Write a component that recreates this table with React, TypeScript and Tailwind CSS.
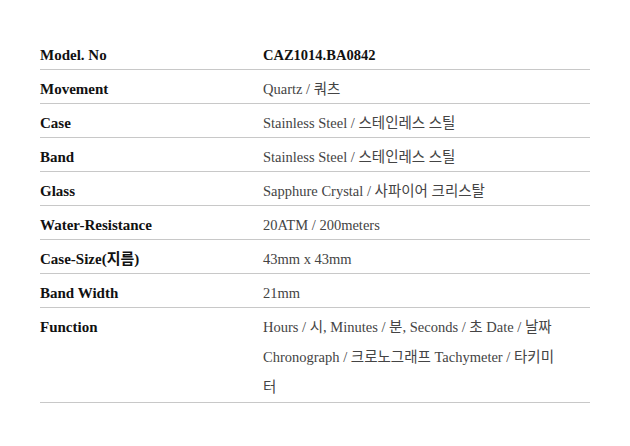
const rows: { label: string; value: string; bold?: boolean }[] = [
  { label: 'Model. No', value: 'CAZ1014.BA0842', bold: true },
  { label: 'Movement', value: 'Quartz / 쿼츠' },
  { label: 'Case', value: 'Stainless Steel / 스테인레스 스틸' },
  { label: 'Band', value: 'Stainless Steel / 스테인레스 스틸' },
  { label: 'Glass', value: 'Sapphure Crystal / 사파이어 크리스탈' },
  { label: 'Water-Resistance', value: '20ATM / 200meters' },
  { label: 'Case-Size(지름)', value: '43mm x 43mm' },
  { label: 'Band Width', value: '21mm' },
  {
    label: 'Function',
    value:
      'Hours / 시, Minutes / 분, Seconds / 초 Date / 날짜 Chronograph / 크로노그래프 Tachymeter / 타키미터',
  },
]

export default function App() {
  return (
    <div
      className="bg-white w-[630px] h-[446px] pt-[36px] px-[40px]"
      style={{ fontFamily: '"Liberation Serif", "Noto Sans CJK KR", serif' }}
    >
      <div className="w-[550px]">
        {rows.map((r) => (
          <div key={r.label} className="flex border-b border-[#c8c8c8] pt-[5px] leading-[28px] last:leading-[30px] last:pt-[4px]">
            <div className="w-[223px] shrink-0 font-bold text-[15px] text-[#111]">{r.label}</div>
            <div
              className={`w-[300px] text-[14.5px] ${r.bold ? 'font-bold text-[#111]' : 'text-[#444]'}`}
            >
              {r.value}
            </div>
          </div>
        ))}
      </div>
    </div>
  )
}
